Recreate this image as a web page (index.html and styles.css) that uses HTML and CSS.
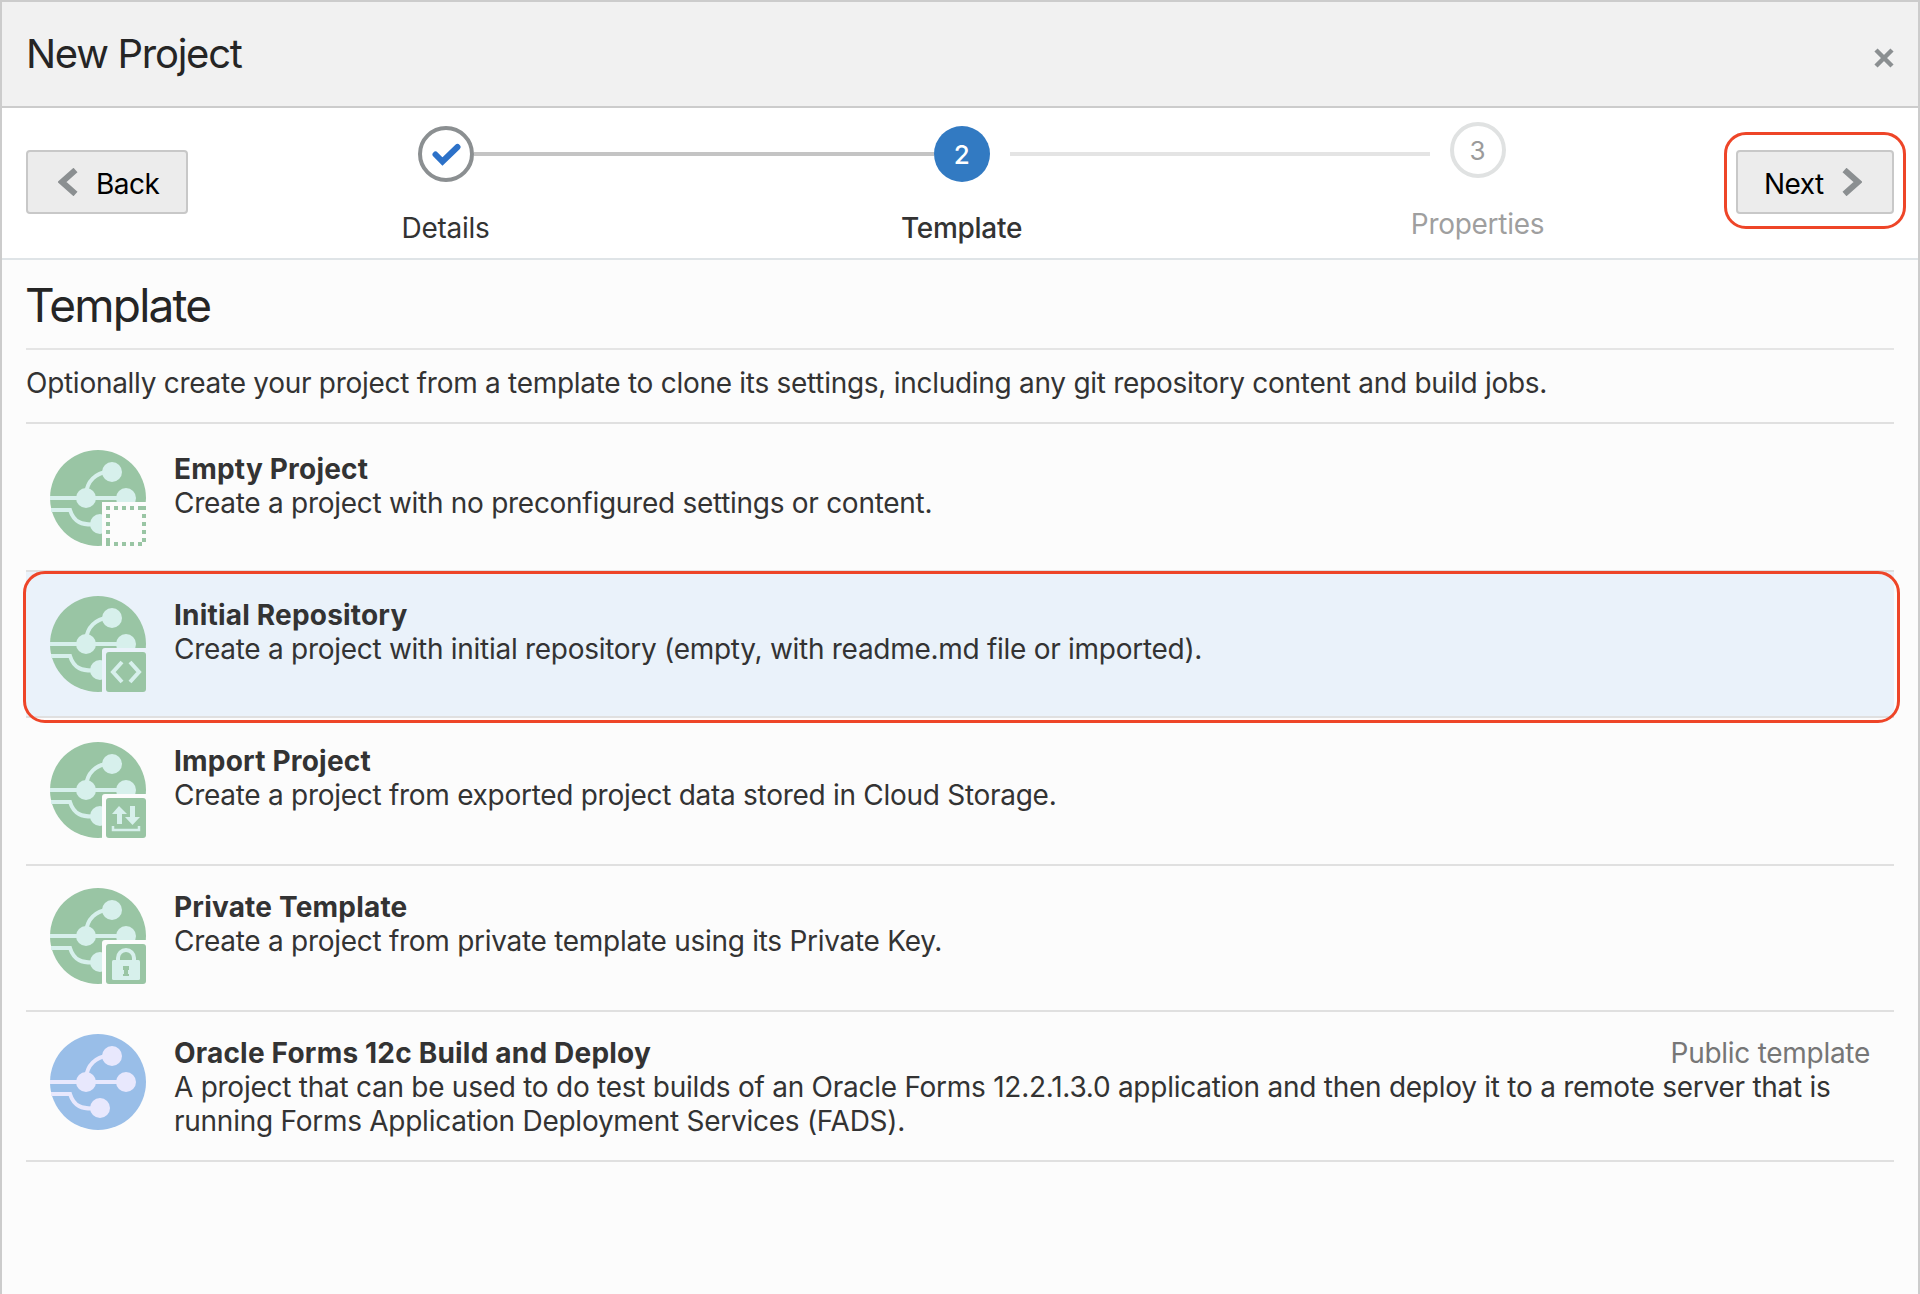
FILE: index.html
```html
<!DOCTYPE html>
<html lang="en">
<head>
<meta charset="utf-8">
<title>New Project</title>
<link rel="stylesheet" href="styles.css">
</head>
<body>
<svg class="defs" width="0" height="0" aria-hidden="true">
  <symbol id="branches" viewBox="0 0 96 96">
    <circle class="disc" cx="48" cy="48" r="48"/>
    <path class="wire" d="M0 48H76M36 44C37 31 46 23 58 21.500M1 60H20C24 73 33 74.500 42 74.500H50"/>
    <g class="node"><circle cx="62" cy="22" r="10"/><circle cx="36" cy="48" r="10"/><circle cx="76" cy="48" r="10"/><circle cx="50" cy="74" r="10"/></g>
  </symbol>
</svg>
<main class="dialog">
  <header class="titlebar">
    <h1>New Project</h1>
    <svg class="close" viewBox="0 0 20 20"><path d="M2 2L18 18M18 2L2 18"/></svg>
  </header>
  <nav class="wizard">
    <button class="btn back"><svg class="chev" viewBox="0 0 20 28"><path d="M17.500 2L4 14L17.500 26"/></svg><span>Back</span></button>
    <ol class="train">
      <li class="step done"><span class="dot"><svg viewBox="0 0 30 24"><path d="M4.500 12.500L11.500 19.500L26.500 5"/></svg></span><span class="label">Details</span></li>
      <li class="bar dark"></li>
      <li class="step current"><span class="dot">2</span><span class="label">Template</span></li>
      <li class="bar light"></li>
      <li class="step next"><span class="dot">3</span><span class="label">Properties</span></li>
    </ol>
    <div class="callout-anchor">
      <button class="btn forward"><span>Next</span><svg class="chev" viewBox="0 0 20 28"><path d="M2.500 2L16 14L2.500 26"/></svg></button>
      <i class="callout callout-next"></i>
    </div>
  </nav>
  <section class="content">
    <h2>Template</h2>
    <p class="intro">Optionally create your project from a template to clone its settings, including any git repository content and build jobs.</p>
    <ul class="templates">
      <li class="item">
        <svg class="icon" viewBox="0 0 96 96"><use href="#branches"/><path class="cut" d="M52 52H97V97H52z"/><path class="dots" d="M56 58H96M94 56V96M56 94H96M58 56V96"/></svg>
        <div class="text"><h3>Empty Project</h3><p>Create a project with no preconfigured settings or content.</p></div>
      </li>
      <li class="item selected">
        <svg class="icon" viewBox="0 0 96 96"><use href="#branches"/><path class="cut" d="M52 97V55Q52 52 55 52H97V97z"/><rect class="disc" x="56" y="56" width="40" height="40" rx="3"/><path class="code" d="M72 66L63 76L72 86M80 66L89 76L80 86"/></svg>
        <div class="text"><h3>Initial Repository</h3><p>Create a project with initial repository (empty, with readme.md file or imported).</p></div>
        <i class="callout callout-row"></i>
      </li>
      <li class="item import">
        <svg class="icon" viewBox="0 0 96 96"><use href="#branches"/><path class="cut" d="M52 97V55Q52 52 55 52H97V97z"/><rect class="disc" x="56" y="56" width="40" height="40" rx="3"/><path class="node" d="M69 64L77 72H72V82H67V72H62zM80 64H85V75H90L82.500 83L75 75H80z"/><path class="tray" d="M63 84V88H89V84"/></svg>
        <div class="text"><h3>Import Project</h3><p>Create a project from exported project data stored in Cloud Storage.</p></div>
      </li>
      <li class="item private">
        <svg class="icon" viewBox="0 0 96 96"><use href="#branches"/><path class="cut" d="M52 97V55Q52 52 55 52H97V97z"/><rect class="disc" x="56" y="56" width="40" height="40" rx="3"/><path class="shackle" d="M68 74V70A8 8 0 0 1 84 70V74"/><rect class="node" x="62" y="72" width="28" height="20" rx="1.500"/><path class="disc" d="M73 78H79V82H78V86H79V88H73V86H74V82H73z"/></svg>
        <div class="text"><h3>Private Template</h3><p>Create a project from private template using its Private Key.</p></div>
      </li>
      <li class="item public">
        <svg class="icon" viewBox="0 0 96 96"><use href="#branches"/></svg>
        <div class="text"><div class="headline"><h3>Oracle Forms 12c Build and Deploy</h3><span class="tag">Public template</span></div><p>A project that can be used to do test builds of an Oracle Forms 12.2.1.3.0 application and then deploy it to a remote server that is</p><p>running Forms Application Deployment Services (FADS).</p></div>
      </li>
    </ul>
  </section>
</main>
</body>
</html>
```
FILE: styles.css
```css
* { box-sizing: border-box; }
body { margin: 0; font-family: Inter, "Liberation Sans", sans-serif; font-size: 28px; color: #333; letter-spacing: -0.280px; }
h1, h2, h3, p, ul, ol { margin: 0; padding: 0; font-weight: 400; }
ul, ol { list-style: none; }
.defs { display: block; height: 0; }
.dialog { height: 1294px; border: 2px solid #ccc; border-bottom: 0; background: #fcfcfc; overflow: hidden; }
.titlebar { height: 106px; display: flex; align-items: center; justify-content: space-between; padding: 0 24px; background: #f1f1f1; border-bottom: 2px solid #ccc; }
h1 { font-size: 40px; line-height: 48px; color: #252525; letter-spacing: -1.280px; white-space: nowrap; }
.close { width: 20px; height: 20px; margin-top: 8px; fill: none; stroke: #8b8f91; stroke-width: 4.500; }

.wizard { height: 152px; display: flex; align-items: flex-start; justify-content: space-between; padding: 0 24px; background: #fff; border-bottom: 2px solid #dfe4e7; }
.btn { display: flex; align-items: center; height: 64px; margin: 42px 0 0; padding: 0; font: 28px/34px Inter, "Liberation Sans", sans-serif; letter-spacing: -0.500px; color: #000; background: #ececec; border: 2px solid #c8c8c8; border-radius: 4px; white-space: nowrap; }
.back { width: 162px; padding-left: 30px; gap: 18px; }
.forward { width: 158px; padding-left: 26px; gap: 18px; }
.btn span { padding-top: 4px; }
.chev { width: 20px; height: 28px; fill: none; stroke: #8b8f91; stroke-width: 6; }
.callout-anchor { position: relative; }
.callout { position: absolute; border: 3px solid #ee4528; pointer-events: none; }
.callout-next { left: -12px; right: -12px; top: 24px; bottom: -15px; border-radius: 22px; }

.train { display: flex; align-items: flex-start; margin-right: 1px; }
.step { width: 56px; display: flex; flex-direction: column; align-items: center; padding-top: 18px; }
.dot { width: 56px; height: 56px; border-radius: 50%; display: flex; align-items: center; justify-content: center; font-size: 26px; }
.done .dot { border: 4px solid #8b8f91; }
.dot svg { width: 30px; height: 24px; fill: none; stroke: #2c71c8; stroke-width: 6; stroke-linecap: round; }
.current .dot { background: #327ac2; color: #fff; font-weight: 500; }
.next { padding-top: 14px; }
.next .dot { border: 4px solid #e0e2e2; color: #9b9b9b; }
.label { margin-top: 29px; line-height: 34px; white-space: nowrap; }
.current .label { font-weight: 500; }
.next .label { color: #9f9f9f; }
.bar { height: 4px; margin-top: 44px; }
.dark { width: 460px; background: #c4c4c4; }
.light { width: 420px; margin-left: 20px; margin-right: 20px; background: #e4e4e4; }

.content { padding: 0 24px; }
h2 { height: 90px; padding-top: 17px; font-size: 46px; line-height: 56px; color: #252525; letter-spacing: -1.800px; text-indent: -1px; border-bottom: 2px solid #e5e5e5; }
.intro { height: 74px; padding-top: 16px; line-height: 34px; border-bottom: 2px solid #e0e0e0; white-space: nowrap; }
.templates { padding-top: 2px; }
.item { position: relative; height: 146px; display: flex; gap: 28px; padding: 24px 24px 0; border-bottom: 2px solid #e0e0e0; white-space: nowrap; }
.selected { background: #eaf2fa; }
.import { height: 148px; }
.private { padding-top: 22px; }
.public { height: 150px; padding-top: 22px; }
.callout-row { left: -3px; right: -6px; top: -1px; bottom: -7px; border-radius: 22px; }
.text { flex: 1; line-height: 34px; padding-top: 2px; }
h3 { font-size: 28px; font-weight: 700; letter-spacing: 0.200px; }
.headline { display: flex; justify-content: space-between; }
.tag { color: #767676; }
.public p { letter-spacing: -0.260px; }

.icon { width: 96px; height: 96px; --disc: #99c5a4; --node: #d7f0ec; --cut: #fcfcfc; }
.selected .icon { --cut: #eaf2fa; }
.public .icon { --disc: #99bee8; --node: #e8e8fd; }
.disc { fill: var(--disc); }
.node { fill: var(--node); }
.wire, .code, .tray, .shackle { fill: none; stroke: var(--node); stroke-width: 4; }
.tray { stroke-width: 2.500; }
.cut { fill: var(--cut); }
.dots { fill: none; stroke: var(--disc); stroke-width: 4; stroke-dasharray: 4 4; }
```
